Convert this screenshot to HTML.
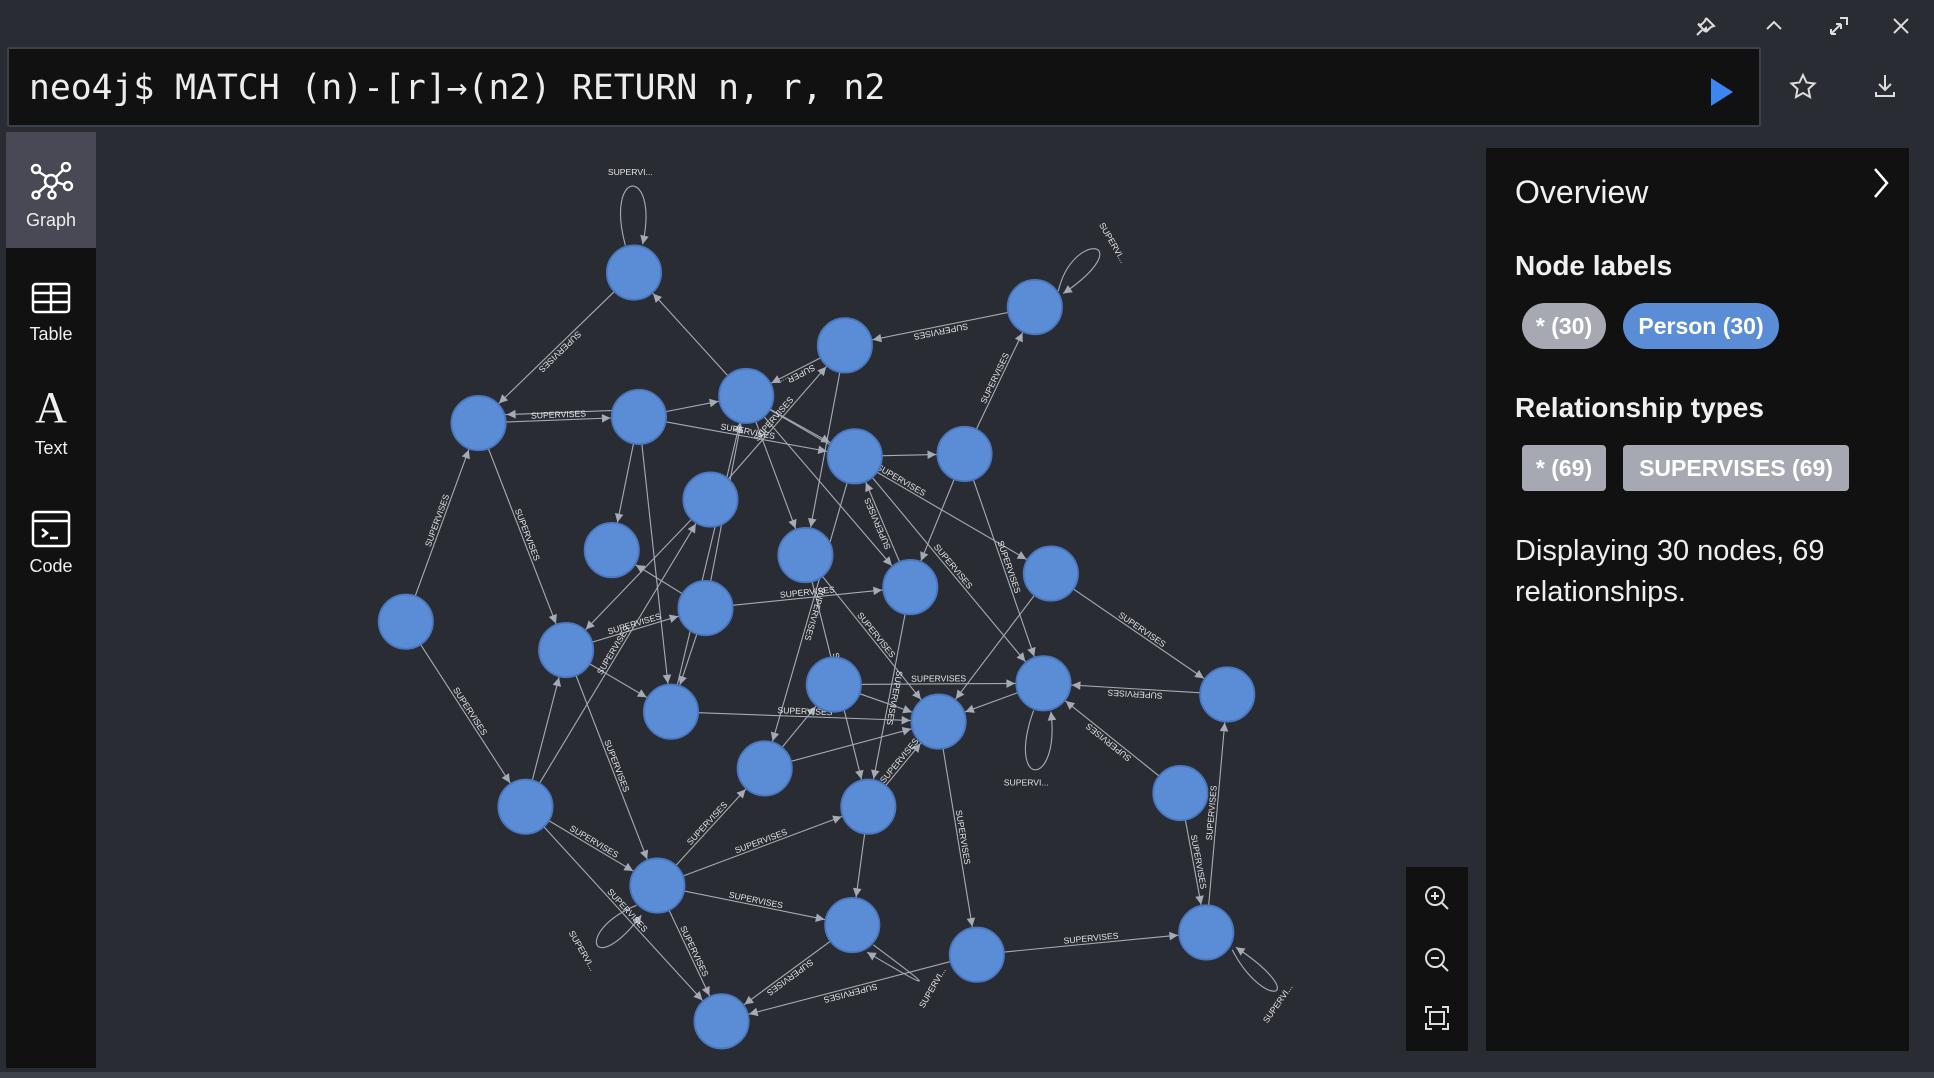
<!DOCTYPE html>
<html><head><meta charset="utf-8"><style>
*{margin:0;padding:0;box-sizing:border-box}
body{width:1934px;height:1078px;background:#2a2c33;position:relative;overflow:hidden;font-family:"Liberation Sans",sans-serif;color:#fff}
.abs{position:absolute}
#editor{left:7px;top:47px;width:1754px;height:80px;background:#111;border:2px solid #3b414b;border-radius:2px}
#editor .q{position:absolute;left:20px;top:19px;font-family:"DejaVu Sans Mono","Liberation Mono",monospace;font-size:34.7px;color:#ececec;white-space:pre}
#side{left:6px;top:132px;width:90px;height:936px;background:#111}
.sb{position:absolute;left:0;width:90px;text-align:center;font-size:18px;color:#eee}
#panel{left:1486px;top:148px;width:423px;height:903px;background:#111}
.pill{position:absolute;height:46px;line-height:46px;font-weight:bold;font-size:23px;color:#fff;text-align:center}
#zc{left:1406px;top:867px;width:62px;height:184px;background:#111}
svg text{font-family:"Liberation Sans",sans-serif}
</style></head><body>
<svg class="abs" style="left:1690px;top:10px" width="230" height="32" viewBox="0 0 230 32" fill="none" stroke="#ddd" stroke-width="2">
<path d="M16 8l8 8-3 1-4 4-1-3-3 3M16 8l-1 3-4 4-3-1 8 8M12 20l-5 5"/>
<path d="M77 19l7-7 7 7"/>
<path d="M141 24l10-10M141 24v-5M141 24h5M151 14v5M151 14h-5M150 8h7v7"/>
<path d="M204 9l14 14M218 9l-14 14"/>
</svg>
<div id="editor" class="abs"><div class="q">neo4j$ MATCH (n)-[r]→(n2) RETURN n, r, n2</div>
<svg style="position:absolute;left:1700px;top:28px" width="26" height="30"><path d="M2 1l22 14L2 29z" fill="#3b86f0"/></svg></div>
<svg class="abs" style="left:1788px;top:72px" width="120" height="36" fill="none" stroke="#ddd" stroke-width="2">
<path d="M15 3l3.5 7.5 8 1-6 5.5 1.5 8-7-4-7 4 1.5-8-6-5.5 8-1z"/>
<path d="M97 3v15M91 12l6 6 6-6M88 20v4h18v-4"/>
</svg>
<div id="side" class="abs">
<div class="sb" style="top:0;height:116px;background:#494955"></div>
<svg class="abs" style="left:24px;top:30px" width="44" height="40" fill="none" stroke="#fff" stroke-width="2.5"><circle cx="21" cy="19" r="6"/><circle cx="6" cy="7" r="4"/><circle cx="36" cy="5" r="4"/><circle cx="38" cy="24" r="4"/><circle cx="22" cy="33" r="3.5"/><circle cx="6" cy="33" r="3.5"/><path d="M9 10l8 5M33 8l-7 7M35 23l-9-3M22 25v5M9 30l8-7"/></svg>
<div class="sb" style="top:78px">Graph</div>
<svg class="abs" style="left:25px;top:150px" width="40" height="32" fill="none" stroke="#fff" stroke-width="2.5"><rect x="2" y="2" width="36" height="28" rx="3"/><path d="M2 11h36M2 20h36M20 2v28"/></svg>
<div class="sb" style="top:192px">Table</div>
<div class="sb" style="top:250px;font-family:'Liberation Serif',serif;font-size:44px;font-weight:300">A</div>
<div class="sb" style="top:306px">Text</div>
<svg class="abs" style="left:25px;top:378px" width="40" height="38" fill="none" stroke="#fff" stroke-width="2.5"><rect x="2" y="2" width="36" height="34" rx="3"/><path d="M2 11h36M11 19l5 4-5 4M19 28h8"/></svg>
<div class="sb" style="top:424px">Code</div>
</div>
<svg class="abs" style="left:0;top:0" width="1934" height="1078" viewBox="0 0 1568 874">
<defs><marker id="a" markerUnits="userSpaceOnUse" viewBox="-8 -4 40 8" refX="23" refY="0" markerWidth="40" markerHeight="8" orient="auto"><path d="M-7 -3.5L0 0L-7 3.5z" fill="#a5abb6"/></marker>
<marker id="b" markerUnits="userSpaceOnUse" viewBox="-8 -4 10 8" refX="0" refY="0" markerWidth="10" markerHeight="8" orient="auto"><path d="M-7 -3.5L0 0L-7 3.5z" fill="#a5abb6"/></marker></defs>
<g fill="none" stroke="#a5abb6" stroke-width="0.9" marker-end="url(#a)">
<path id="e1" d="M514 221L388 343"/><path id="e2" d="M605 321L514 221"/><path id="e3" d="M839 249L685 280"/><path id="e4" d="M782 368L839 249"/>
<path id="e5" d="M388 343L518 338"/><path id="e6" d="M518 332L388 337"/><path id="e7" d="M518 338L605 321"/><path id="e8" d="M685 280L605 321"/>
<path id="e9" d="M605 321L693 370"/><path id="e10" d="M605 321L738 476"/><path id="e11" d="M605 321L653 450"/><path id="e12" d="M518 338L693 370"/>
<path id="e13" d="M693 370L782 368"/><path id="e14" d="M388 343L459 527"/><path id="e15" d="M329 504L388 343"/><path id="e16" d="M329 504L426 654"/>
<path id="e17" d="M426 654L533 718"/><path id="e18" d="M426 654L585 828"/><path id="e19" d="M459 527L572 493"/><path id="e20" d="M572 493L496 446"/>
<path id="e21" d="M576 405L459 527"/><path id="e22" d="M518 338L496 446"/><path id="e23" d="M572 493L605 321"/><path id="e24" d="M572 493L544 577"/>
<path id="e25" d="M459 527L544 577"/><path id="e26" d="M544 577L761 585"/><path id="e27" d="M676 555L761 585"/><path id="e28" d="M676 555L846 554"/>
<path id="e29" d="M738 476L693 370"/><path id="e30" d="M782 368L738 476"/><path id="e31" d="M782 368L846 554"/><path id="e32" d="M693 370L846 554"/>
<path id="e33" d="M852 465L995 563"/><path id="e34" d="M995 563L846 554"/><path id="e35" d="M846 554L761 585"/><path id="e36" d="M957 643L846 554"/>
<path id="e37" d="M957 643L978 756"/><path id="e38" d="M978 756L995 563"/><path id="e39" d="M792 774L978 756"/><path id="e40" d="M761 585L792 774"/>
<path id="e41" d="M704 654L761 585"/><path id="e42" d="M704 654L691 750"/><path id="e43" d="M691 750L585 828"/><path id="e44" d="M792 774L585 828"/>
<path id="e45" d="M533 718L691 750"/><path id="e46" d="M533 718L704 654"/><path id="e47" d="M533 718L620 623"/><path id="e48" d="M620 623L761 585"/>
<path id="e49" d="M426 654L576 405"/><path id="e50" d="M533 718L585 828"/><path id="e51" d="M426 654L459 527"/><path id="e52" d="M459 527L533 718"/>
<path id="e53" d="M576 405L685 280"/><path id="e54" d="M653 450L761 585"/><path id="e55" d="M685 280L653 450"/><path id="e56" d="M738 476L704 654"/>
<path id="e57" d="M653 450L704 654"/><path id="e58" d="M544 577L605 321"/><path id="e59" d="M620 623L676 555"/><path id="e60" d="M852 465L761 585"/>
<path id="e61" d="M572 493L738 476"/><path id="e62" d="M693 370L620 623"/><path id="e63" d="M518 338L544 577"/><path id="e64" d="M605 321L852 465"/>
</g>
<g fill="none" stroke="#a5abb6" stroke-width="0.9" marker-end="url(#b)">
<path d="M507 199C490 135 535 135 521 198"/><path d="M858 236C870 185 925 195 862 238"/><path d="M838 576C815 640 860 640 852 577"/>
<path d="M999 770C1025 820 1065 810 1002 768"/><path d="M708 766C740 790 775 815 703 772"/><path d="M516 734C465 755 480 795 520 742"/>
</g>
<g font-size="7" fill="#e6e6e6" text-anchor="middle">
<text dy="-2"><textPath href="#e1" startOffset="50%">SUPERVISES</textPath></text><text dy="-2"><textPath href="#e3" startOffset="50%">SUPERVISES</textPath></text>
<text dy="-2"><textPath href="#e4" startOffset="50%">SUPERVISES</textPath></text><text dy="-2"><textPath href="#e5" startOffset="50%">SUPERVISES</textPath></text>
<text dy="-2"><textPath href="#e8" startOffset="50%">SUPER...</textPath></text><text dy="-2"><textPath href="#e12" startOffset="50%">SUPERVISES</textPath></text>
<text dy="-2"><textPath href="#e14" startOffset="50%">SUPERVISES</textPath></text><text dy="-2"><textPath href="#e15" startOffset="50%">SUPERVISES</textPath></text>
<text dy="-2"><textPath href="#e16" startOffset="50%">SUPERVISES</textPath></text><text dy="-2"><textPath href="#e17" startOffset="50%">SUPERVISES</textPath></text>
<text dy="-2"><textPath href="#e18" startOffset="50%">SUPERVISES</textPath></text><text dy="-2"><textPath href="#e19" startOffset="50%">SUPERVISES</textPath></text>
<text dy="-2"><textPath href="#e26" startOffset="50%">SUPERVISES</textPath></text><text dy="-2"><textPath href="#e28" startOffset="50%">SUPERVISES</textPath></text>
<text dy="-2"><textPath href="#e29" startOffset="50%">SUPERVISES</textPath></text><text dy="-2"><textPath href="#e31" startOffset="50%">SUPERVISES</textPath></text>
<text dy="-2"><textPath href="#e32" startOffset="50%">SUPERVISES</textPath></text><text dy="-2"><textPath href="#e33" startOffset="50%">SUPERVISES</textPath></text>
<text dy="-2"><textPath href="#e34" startOffset="50%">SUPERVISES</textPath></text><text dy="-2"><textPath href="#e36" startOffset="50%">SUPERVISES</textPath></text>
<text dy="-2"><textPath href="#e37" startOffset="50%">SUPERVISES</textPath></text><text dy="-2"><textPath href="#e38" startOffset="50%">SUPERVISES</textPath></text>
<text dy="-2"><textPath href="#e39" startOffset="50%">SUPERVISES</textPath></text><text dy="-2"><textPath href="#e40" startOffset="50%">SUPERVISES</textPath></text>
<text dy="-2"><textPath href="#e41" startOffset="50%">SUPERVISES</textPath></text><text dy="-2"><textPath href="#e43" startOffset="50%">SUPERVISES</textPath></text>
<text dy="-2"><textPath href="#e44" startOffset="50%">SUPERVISES</textPath></text><text dy="-2"><textPath href="#e45" startOffset="50%">SUPERVISES</textPath></text>
<text dy="-2"><textPath href="#e46" startOffset="50%">SUPERVISES</textPath></text><text dy="-2"><textPath href="#e47" startOffset="50%">SUPERVISES</textPath></text>
<text dy="-2"><textPath href="#e49" startOffset="50%">SUPERVISES</textPath></text><text dy="-2"><textPath href="#e50" startOffset="50%">SUPERVISES</textPath></text>
<text dy="-2"><textPath href="#e52" startOffset="50%">SUPERVISES</textPath></text><text dy="-2"><textPath href="#e53" startOffset="50%">SUPERVISES</textPath></text>
<text dy="-2"><textPath href="#e54" startOffset="50%">SUPERVISES</textPath></text><text dy="-2"><textPath href="#e56" startOffset="50%">SUPERVISES</textPath></text>
<text dy="-2"><textPath href="#e57" startOffset="50%">SUPERVISES</textPath></text><text dy="-2"><textPath href="#e61" startOffset="50%">SUPERVISES</textPath></text>
<text dy="-2"><textPath href="#e62" startOffset="50%">SUPERVISES</textPath></text><text dy="-2"><textPath href="#e64" startOffset="50%">SUPERVISES</textPath></text>
<text x="511" y="142">SUPERVI...</text><text x="900" y="198" transform="rotate(60 900 198)">SUPERVI...</text>
<text x="832" y="637">SUPERVI...</text><text x="1038" y="815" transform="rotate(-55 1038 815)">SUPERVI...</text>
<text x="758" y="802" transform="rotate(-60 758 802)">SUPERVI...</text><text x="470" y="772" transform="rotate(60 470 772)">SUPERVI...</text>
</g>
<g fill="#5b8dd6" stroke="#4a78c0" stroke-width="1.5">
<circle cx="514" cy="221" r="22"/><circle cx="839" cy="249" r="22"/><circle cx="685" cy="280" r="22"/><circle cx="388" cy="343" r="22"/><circle cx="518" cy="338" r="22"/><circle cx="605" cy="321" r="22"/><circle cx="693" cy="370" r="22"/><circle cx="782" cy="368" r="22"/><circle cx="576" cy="405" r="22"/><circle cx="496" cy="446" r="22"/><circle cx="653" cy="450" r="22"/><circle cx="738" cy="476" r="22"/><circle cx="852" cy="465" r="22"/><circle cx="572" cy="493" r="22"/><circle cx="329" cy="504" r="22"/><circle cx="459" cy="527" r="22"/><circle cx="544" cy="577" r="22"/><circle cx="676" cy="555" r="22"/><circle cx="846" cy="554" r="22"/><circle cx="761" cy="585" r="22"/><circle cx="995" cy="563" r="22"/><circle cx="620" cy="623" r="22"/><circle cx="704" cy="654" r="22"/><circle cx="426" cy="654" r="22"/><circle cx="957" cy="643" r="22"/><circle cx="533" cy="718" r="22"/><circle cx="691" cy="750" r="22"/><circle cx="792" cy="774" r="22"/><circle cx="978" cy="756" r="22"/><circle cx="585" cy="828" r="22"/>
</g>
</svg>
<div id="panel" class="abs">
<div class="abs" style="left:29px;top:26px;font-size:32px;color:#f0f0f0">Overview</div>
<svg class="abs" style="left:385px;top:18px" width="20" height="34" fill="none" stroke="#fff" stroke-width="2.5"><path d="M4 3l12 14-12 14"/></svg>
<div class="abs" style="left:29px;top:102px;font-size:28px;font-weight:bold;color:#f0f0f0">Node labels</div>
<div class="pill" style="left:36px;top:155px;width:84px;border-radius:23px;background:#a6a9b2">* (30)</div>
<div class="pill" style="left:137px;top:155px;width:156px;border-radius:23px;background:#5b8dd6">Person (30)</div>
<div class="abs" style="left:29px;top:244px;font-size:28px;font-weight:bold;color:#f0f0f0">Relationship types</div>
<div class="pill" style="left:36px;top:297px;width:84px;border-radius:4px;background:#a6a9b2">* (69)</div>
<div class="pill" style="left:137px;top:297px;width:226px;border-radius:4px;background:#a6a9b2">SUPERVISES (69)</div>
<div class="abs" style="left:29px;top:383px;width:380px;font-size:29px;line-height:41px;color:#eee">Displaying 30 nodes, 69 relationships.</div>
</div>
<div id="zc" class="abs">
<svg width="62" height="184" fill="none" stroke="#ddd" stroke-width="2"><circle cx="29" cy="29" r="9"/><path d="M36 36l6 6M25 29h8M29 25v8"/><circle cx="29" cy="91" r="9"/><path d="M36 98l6 6M25 91h8"/><path d="M20 146v-6h6M36 140h6v6M42 156v6h-6M26 162h-6v-6"/><rect x="24" y="145" width="14" height="12"/></svg>
</div>
<div class="abs" style="left:0;top:1072px;width:1934px;height:6px;background:#3e424b"></div>
</body></html>
